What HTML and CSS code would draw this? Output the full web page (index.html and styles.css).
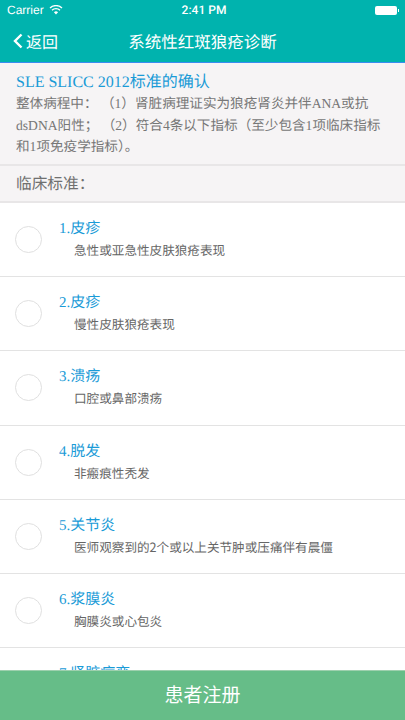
FILE: index.html
```html
<!DOCTYPE html>
<html lang="zh-CN">
<head>
  <meta charset="UTF-8">
  <title>系统性红斑狼疮诊断</title>
  <link rel="stylesheet" href="styles.css">
</head>
<body>

  <div class="screen">
    <header class="topbar">
      <div class="status">
        <div class="status-side">
          <span>Carrier</span>
          <svg class="wifi" width="14" height="10" viewBox="0 0 14 10">
            <path d="M7 9.6 4.9 7.3a3 3 0 0 1 4.2 0Z" fill="#fff"/>
            <path d="M3 5.2a5.7 5.7 0 0 1 8 0M1 3a8.6 8.6 0 0 1 12 0" fill="none" stroke="#fff" stroke-width="1.3"/>
          </svg>
        </div>
        <div class="status-time">2:41 PM</div>
        <div class="status-side status-right">
          <div class="battery"><span class="battery-tip"></span></div>
        </div>
      </div>
      <div class="nav">
        <div class="back">
          <svg width="10" height="16" viewBox="0 0 10 16">
            <path d="M8.5 1.5 2 8l6.5 6.5" fill="none" stroke="#fff" stroke-width="2.4"/>
          </svg>
          <span>返回</span>
        </div>
        <div class="nav-title">系统性红斑狼疮诊断</div>
      </div>
    </header>

    <main class="content">
      <section class="intro">
        <h3>SLE SLICC 2012标准的确认</h3>
        <p>整体病程中： （1）肾脏病理证实为狼疮肾炎并伴ANA或抗dsDNA阳性； （2）符合4条以下指标（至少包含1项临床指标和1项免疫学指标）。</p>
      </section>

      <div class="section-label">临床标准：</div>

      <ul class="criteria">
        <li class="item">
          <span class="radio"></span>
          <div>
            <div class="item-title">1.皮疹</div>
            <div class="item-desc">急性或亚急性皮肤狼疮表现</div>
          </div>
        </li>
        <li class="item">
          <span class="radio"></span>
          <div>
            <div class="item-title">2.皮疹</div>
            <div class="item-desc">慢性皮肤狼疮表现</div>
          </div>
        </li>
        <li class="item">
          <span class="radio"></span>
          <div>
            <div class="item-title">3.溃疡</div>
            <div class="item-desc">口腔或鼻部溃疡</div>
          </div>
        </li>
        <li class="item">
          <span class="radio"></span>
          <div>
            <div class="item-title">4.脱发</div>
            <div class="item-desc">非瘢痕性秃发</div>
          </div>
        </li>
        <li class="item">
          <span class="radio"></span>
          <div>
            <div class="item-title">5.关节炎</div>
            <div class="item-desc">医师观察到的2个或以上关节肿或压痛伴有晨僵</div>
          </div>
        </li>
        <li class="item">
          <span class="radio"></span>
          <div>
            <div class="item-title">6.浆膜炎</div>
            <div class="item-desc">胸膜炎或心包炎</div>
          </div>
        </li>
        <li class="item">
          <span class="radio"></span>
          <div>
            <div class="item-title">7.肾脏病变</div>
          </div>
        </li>
      </ul>
    </main>

    <button class="register">患者注册</button>
  </div>

</body>
</html>
```

FILE: styles.css
```css
* {
  box-sizing: border-box;
}

body {
  margin: 0;
  font-family: "Liberation Serif", "Noto Sans CJK SC", serif;
  background: #f6f4f5;
  text-rendering: geometricPrecision;
}

.screen {
  display: flex;
  flex-direction: column;
  width: 405px;
  height: 720px;
  overflow: hidden;
}

.topbar {
  flex: none;
  height: 63px;
  background: #00b3ae;
  border-bottom: 1px solid #3a8cf0;
  color: #fff;
}

.status {
  display: flex;
  align-items: center;
  justify-content: space-between;
  height: 20px;
  padding: 0 8px 0 7px;
  font-family: "Liberation Sans", sans-serif;
  font-size: 12px;
}

.status-side {
  display: flex;
  align-items: center;
  gap: 5px;
  width: 100px;
}

.status-right {
  justify-content: flex-end;
  width: 96px;
}

.status-time {
  font-family: Roboto, sans-serif;
  font-weight: 500;
  font-size: 12px;
}

.battery {
  position: relative;
  width: 22px;
  height: 9px;
  background: #fff;
  border-radius: 2px;
}

.battery-tip {
  position: absolute;
  top: 3px;
  right: -2px;
  width: 1px;
  height: 3px;
  background: #fff;
}

.nav {
  position: relative;
  display: flex;
  align-items: center;
  justify-content: center;
  height: 42px;
  font-family: "Noto Sans CJK SC", sans-serif;
}

.nav-title {
  font-size: 16.5px;
}

.back {
  position: absolute;
  top: 0;
  left: 13px;
  bottom: 0;
  display: flex;
  align-items: center;
  gap: 3px;
  font-size: 16px;
}

.content {
  flex: 1;
  min-height: 0;
  overflow: hidden;
}

.intro {
  height: 103px;
  padding: 10px 16px 0;
  border-bottom: 2px solid #e8e6e7;
}

.intro h3 {
  margin: 0;
  font-size: 16px;
  font-weight: normal;
  line-height: 20px;
  color: #1a9bd7;
}

.intro p {
  margin: 0;
  font-size: 13.6px;
  line-height: 21.5px;
  color: #777;
}

.section-label {
  height: 37px;
  padding-left: 16px;
  font-family: "Noto Sans CJK SC", sans-serif;
  font-size: 15.7px;
  line-height: 33px;
  color: #707070;
  border-bottom: 2px solid #e8e6e7;
}

.criteria {
  margin: 0;
  padding: 0;
  list-style: none;
  background: #fff;
}

.item {
  display: flex;
  align-items: flex-start;
  gap: 17px;
  height: 74.2px;
  padding: 16px 15px 0;
  border-bottom: 1px solid #e3e3e3;
}

.radio {
  flex: none;
  width: 27px;
  height: 27px;
  margin-top: 7px;
  border: 1px solid #e0e0e0;
  border-radius: 50%;
}

.item-title {
  font-size: 15px;
  line-height: 21px;
  color: #1a9bd7;
}

.item-desc {
  padding-left: 15px;
  font-family: "Noto Sans CJK SC", sans-serif;
  font-size: 12.6px;
  line-height: 20px;
  color: #666;
}

.register {
  flex: none;
  width: 100%;
  height: 50px;
  padding: 0 0 4px;
  border: none;
  border-top: 1px solid #9ed0ae;
  background: #66bd88;
  color: #fff;
  font-family: "Noto Sans CJK SC", sans-serif;
  font-size: 19px;
}
```
